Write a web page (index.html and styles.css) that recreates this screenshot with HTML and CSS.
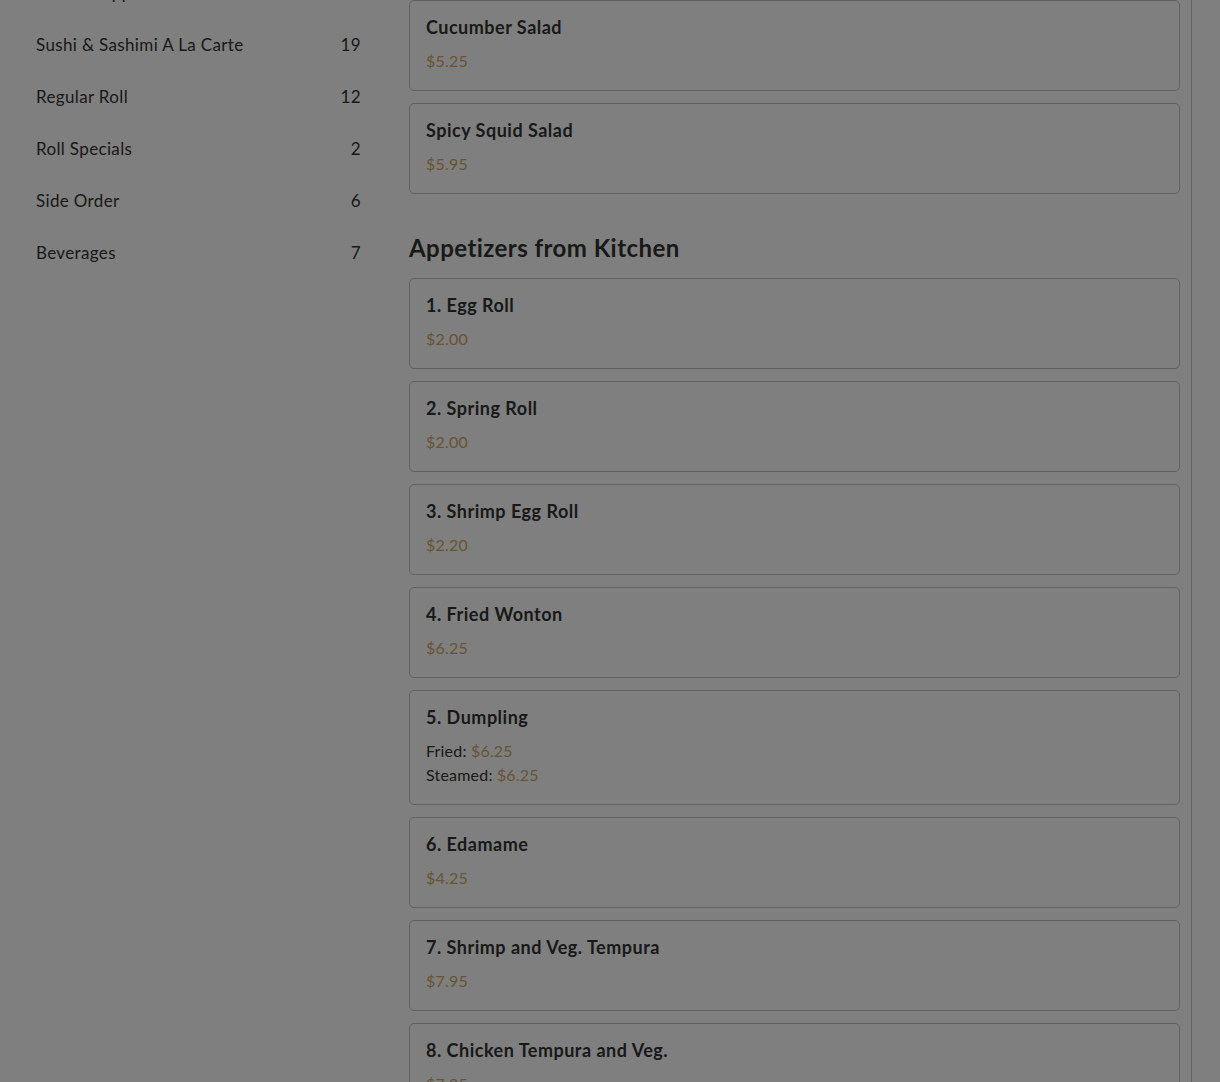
FILE: index.html
```html
<!DOCTYPE html>
<html lang="en">
<head>
<meta charset="utf-8">
<title>Menu</title>
<link rel="stylesheet" href="styles.css">
</head>
<body>
<div class="layout">
  <aside class="sidebar">
    <ul class="cat-list">
      <li class="cat"><span>Kitchen Appetizers</span><span>11</span></li>
      <li class="cat"><span>Sushi &amp; Sashimi A La Carte</span><span>19</span></li>
      <li class="cat"><span>Regular Roll</span><span>12</span></li>
      <li class="cat"><span>Roll Specials</span><span>2</span></li>
      <li class="cat"><span>Side Order</span><span>6</span></li>
      <li class="cat"><span>Beverages</span><span>7</span></li>
    </ul>
  </aside>
  <main class="menu">
    <section class="section">
      <div class="items">
        <div class="card"><h3 class="item-name">Cucumber Salad</h3><div class="prices"><div class="price">$5.25</div></div></div>
        <div class="card"><h3 class="item-name">Spicy Squid Salad</h3><div class="prices"><div class="price">$5.95</div></div></div>
      </div>
    </section>
    <section class="section">
      <h2 class="section-title">Appetizers from Kitchen</h2>
      <div class="items">
        <div class="card"><h3 class="item-name">1. Egg Roll</h3><div class="prices"><div class="price">$2.00</div></div></div>
        <div class="card"><h3 class="item-name">2. Spring Roll</h3><div class="prices"><div class="price">$2.00</div></div></div>
        <div class="card"><h3 class="item-name">3. Shrimp Egg Roll</h3><div class="prices"><div class="price">$2.20</div></div></div>
        <div class="card"><h3 class="item-name">4. Fried Wonton</h3><div class="prices"><div class="price">$6.25</div></div></div>
        <div class="card"><h3 class="item-name">5. Dumpling</h3><div class="prices"><div class="opt">Fried: <span class="price">$6.25</span></div><div class="opt">Steamed: <span class="price">$6.25</span></div></div></div>
        <div class="card"><h3 class="item-name">6. Edamame</h3><div class="prices"><div class="price">$4.25</div></div></div>
        <div class="card"><h3 class="item-name">7. Shrimp and Veg. Tempura</h3><div class="prices"><div class="price">$7.95</div></div></div>
        <div class="card"><h3 class="item-name">8. Chicken Tempura and Veg.</h3><div class="prices"><div class="price">$7.25</div></div></div>
        <div class="card"><h3 class="item-name">9. Beef Negimaki</h3><div class="prices"><div class="price">$8.95</div></div></div>
      </div>
    </section>
  </main>
  <div class="cart"></div>
</div>
<div class="backdrop"></div>
</body>
</html>
```
FILE: styles.css
```css
html, body {
  margin: 0;
  padding: 0;
  background: #ffffff;
  height: 1082px;
  overflow: hidden;
}
body {
  font-family: "Lato", "Noto Sans", sans-serif;
  color: #333333;
}
.layout {
  display: flex;
  align-items: flex-start;
}
.sidebar {
  width: 397px;
  flex: none;
  box-sizing: border-box;
  padding: 0 36px;
  margin-top: -33px;
}
.cat-list {
  list-style: none;
  margin: 0;
  padding: 0;
}
.cat {
  display: flex;
  justify-content: space-between;
  font-size: 17px;
  line-height: 24px;
  letter-spacing: 0.35px;
  padding: 14px 0;
  color: #333333;
}
.menu {
  width: 795px;
  flex: none;
  box-sizing: border-box;
  padding: 0 11px 0 12px;
  border-right: 1px solid #c6c6c6;
  min-height: 1400px;
}
.section-title {
  margin: 38px 0 14px;
  font-size: 24px;
  line-height: 32px;
  font-weight: 700;
  letter-spacing: 0.45px;
  color: #333333;
}
.items {
  display: flex;
  flex-direction: column;
  gap: 12px;
}
.card {
  border: 1px solid #c4c4c4;
  border-radius: 5px;
  padding: 14px 16px 17px;
  background: #ffffff;
}
.item-name {
  margin: 0;
  font-size: 18px;
  line-height: 24px;
  font-weight: 700;
  letter-spacing: 0.5px;
  color: #333333;
}
.prices {
  margin-top: 10px;
  font-size: 16px;
  line-height: 24px;
  letter-spacing: 0.2px;
}
.opt {
  color: #333333;
}
.price {
  color: #d0a764;
}
.cart {
  flex: 1;
}
.backdrop {
  position: fixed;
  inset: 0;
  background: rgba(0, 0, 0, 0.5);
}
```
